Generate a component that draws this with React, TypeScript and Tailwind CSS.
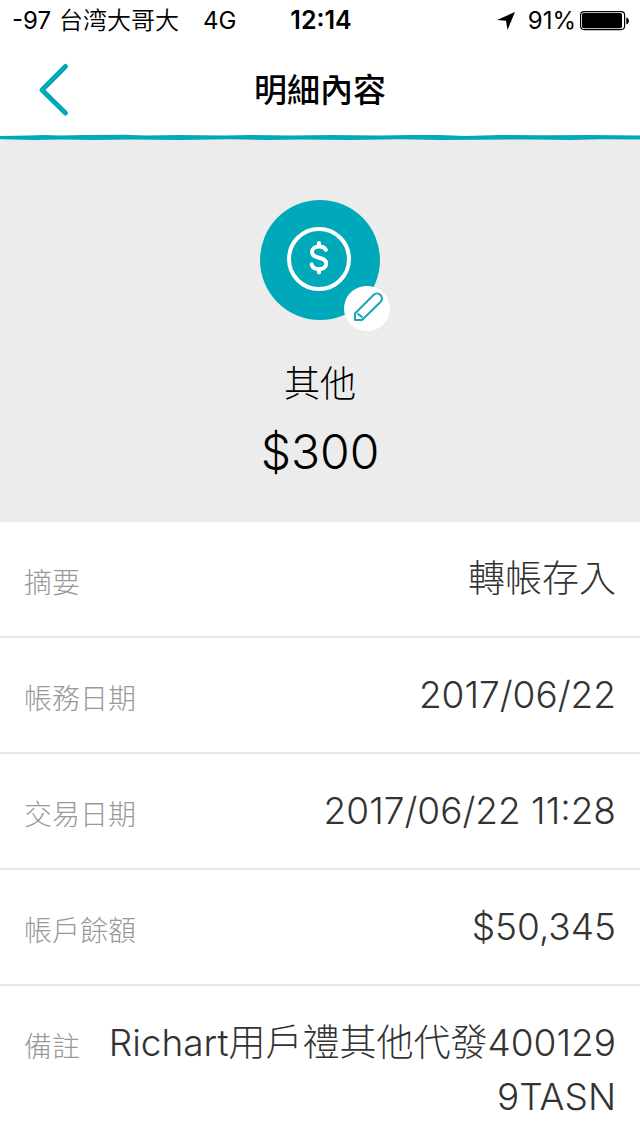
import React from "react";

const details = [
  { label: "摘要", value: "轉帳存入" },
  { label: "帳務日期", value: "2017/06/22" },
  { label: "交易日期", value: "2017/06/22 11:28" },
  { label: "帳戶餘額", value: "$50,345" },
  { label: "備註", value: "Richart用戶禮其他代發4001299TASN" },
];

function StatusBar() {
  return (
    <div className="grid h-[42px] grid-cols-[1fr_auto_1fr] items-center pr-2.5 pl-3 text-2xl text-black">
      <div className="flex whitespace-nowrap">
        <span className="mr-2">-97</span>
        <span className="mr-6 font-[350]">台湾大哥大</span>
        <span>4G</span>
      </div>
      <span className="text-[25px] font-semibold">12:14</span>
      <div className="flex items-center justify-end">
        <svg className="mr-3 size-5" viewBox="0 0 20 20" aria-hidden="true">
          <path d="M19 1 1 9l9 .8L11.500 19Z" fill="#000" />
        </svg>
        <span>91%</span>
        <svg className="ml-1 h-5 w-[50px]" viewBox="0 0 50 20" aria-hidden="true">
          <rect x="0.600" y="0.600" width="44" height="18" rx="3.500" fill="none" stroke="#000" strokeWidth="1.200" />
          <rect x="2" y="2" width="40" height="15.200" rx="1.800" fill="#000" />
          <path d="M46.300 6.500c3.400.3 3.400 6.500 0 6.800Z" fill="#000" />
        </svg>
      </div>
    </div>
  );
}

function Header() {
  return (
    <header className="bg-white">
      <div className="grid h-[92px] grid-cols-[1fr_auto_1fr] items-center pt-1">
        <button type="button" aria-label="返回" className="ml-8 flex h-16 w-12 items-center">
          <svg className="h-14 w-11" viewBox="0 0 44 56" fill="none" aria-hidden="true">
            <path d="M33.500 4.500 10 28 33.500 51" stroke="#00a9b9" strokeWidth="5" strokeLinecap="round" strokeLinejoin="round" />
          </svg>
        </button>
        <h1 className="text-[33px] leading-10 font-medium text-black">明細內容</h1>
      </div>
      <svg className="block h-1.5 w-full bg-[#ececec]" viewBox="0 0 640 6" preserveAspectRatio="none" aria-hidden="true">
        <path d="M0 0H640V3H0Z" fill="#fff" />
        <path
          d="M0 2 28 1.500 45 1 60 1.600 85 1 125 .8 145 1.500 180 1 225 1.400 250 1 290 1.500 330 1 380 1.600 410 1 440 1 465 2 500 1 545 1.300 590 1 640 1.500V5.500L600 5.300 570 6 530 5.400 480 5.800 440 6 400 5.300 350 5.900 300 5.600 270 6 230 5.300 180 5.900 130 5.400 95 6 60 5.400 35 6 0 5.300Z"
          fill="#00a9b9"
        />
      </svg>
    </header>
  );
}

function Summary() {
  return (
    <section className="flex flex-col items-center bg-[#ececec] pt-[60px] pb-[38px] text-black">
      <div className="relative size-[120px] rounded-full bg-[#00a9b9]">
        <svg className="size-full" viewBox="0 0 120 120" fill="none" stroke="#fff" strokeLinecap="round" aria-hidden="true">
          <circle cx="59" cy="59" r="30" strokeWidth="4" />
          <path d="M65.800 49.800C64.700 47.700 62.300 46.500 59 46.500c-4 0-7 2.200-7 5.600 0 3.900 3.300 4.900 7 5.700 4.200.9 7.200 2.200 7.200 5.600 0 3.500-3.200 5.700-7.200 5.700-3.800 0-6.700-1.700-7.300-4.700M59 43v3M59 70v2.500" strokeWidth="4" />
        </svg>
        <button
          type="button"
          aria-label="編輯類別"
          className="absolute -right-2.5 -bottom-[11px] h-[45px] w-[46px] overflow-hidden rounded-full bg-white"
        >
          <svg className="size-full" viewBox="0 0 46 45" fill="none" stroke="#12a9b5" strokeWidth="2" strokeLinejoin="round" aria-hidden="true">
            <path d="M11 34v-6.500L29.500 9a4.900 4.900 0 0 1 7 7L18 34ZM13.500 27.500l5 4" />
          </svg>
        </button>
      </div>
      <p className="mt-[37px] text-4xl leading-[54px] font-light">其他</p>
      <p className="mt-[9px] text-5xl leading-[64px] font-light">$300</p>
    </section>
  );
}

export default function App() {
  return (
    <main className="min-h-screen bg-white font-['Inter','Noto_Sans_CJK_TC',sans-serif]" lang="zh-Hant">
      <StatusBar />
      <Header />
      <Summary />
      <dl>
        {details.map(({ label, value }) => (
          <div
            key={label}
            className="flex items-start justify-between gap-6 border-b-2 border-[#e8e8e8] px-6 py-[30px] last:border-b-0"
          >
            <dt className="shrink-0 pt-2 text-[28px] leading-[46px] font-light text-[#999]">{label}</dt>
            <dd className="text-right text-[37px] leading-[54px] font-light break-all text-[#333]">{value}</dd>
          </div>
        ))}
      </dl>
    </main>
  );
}
